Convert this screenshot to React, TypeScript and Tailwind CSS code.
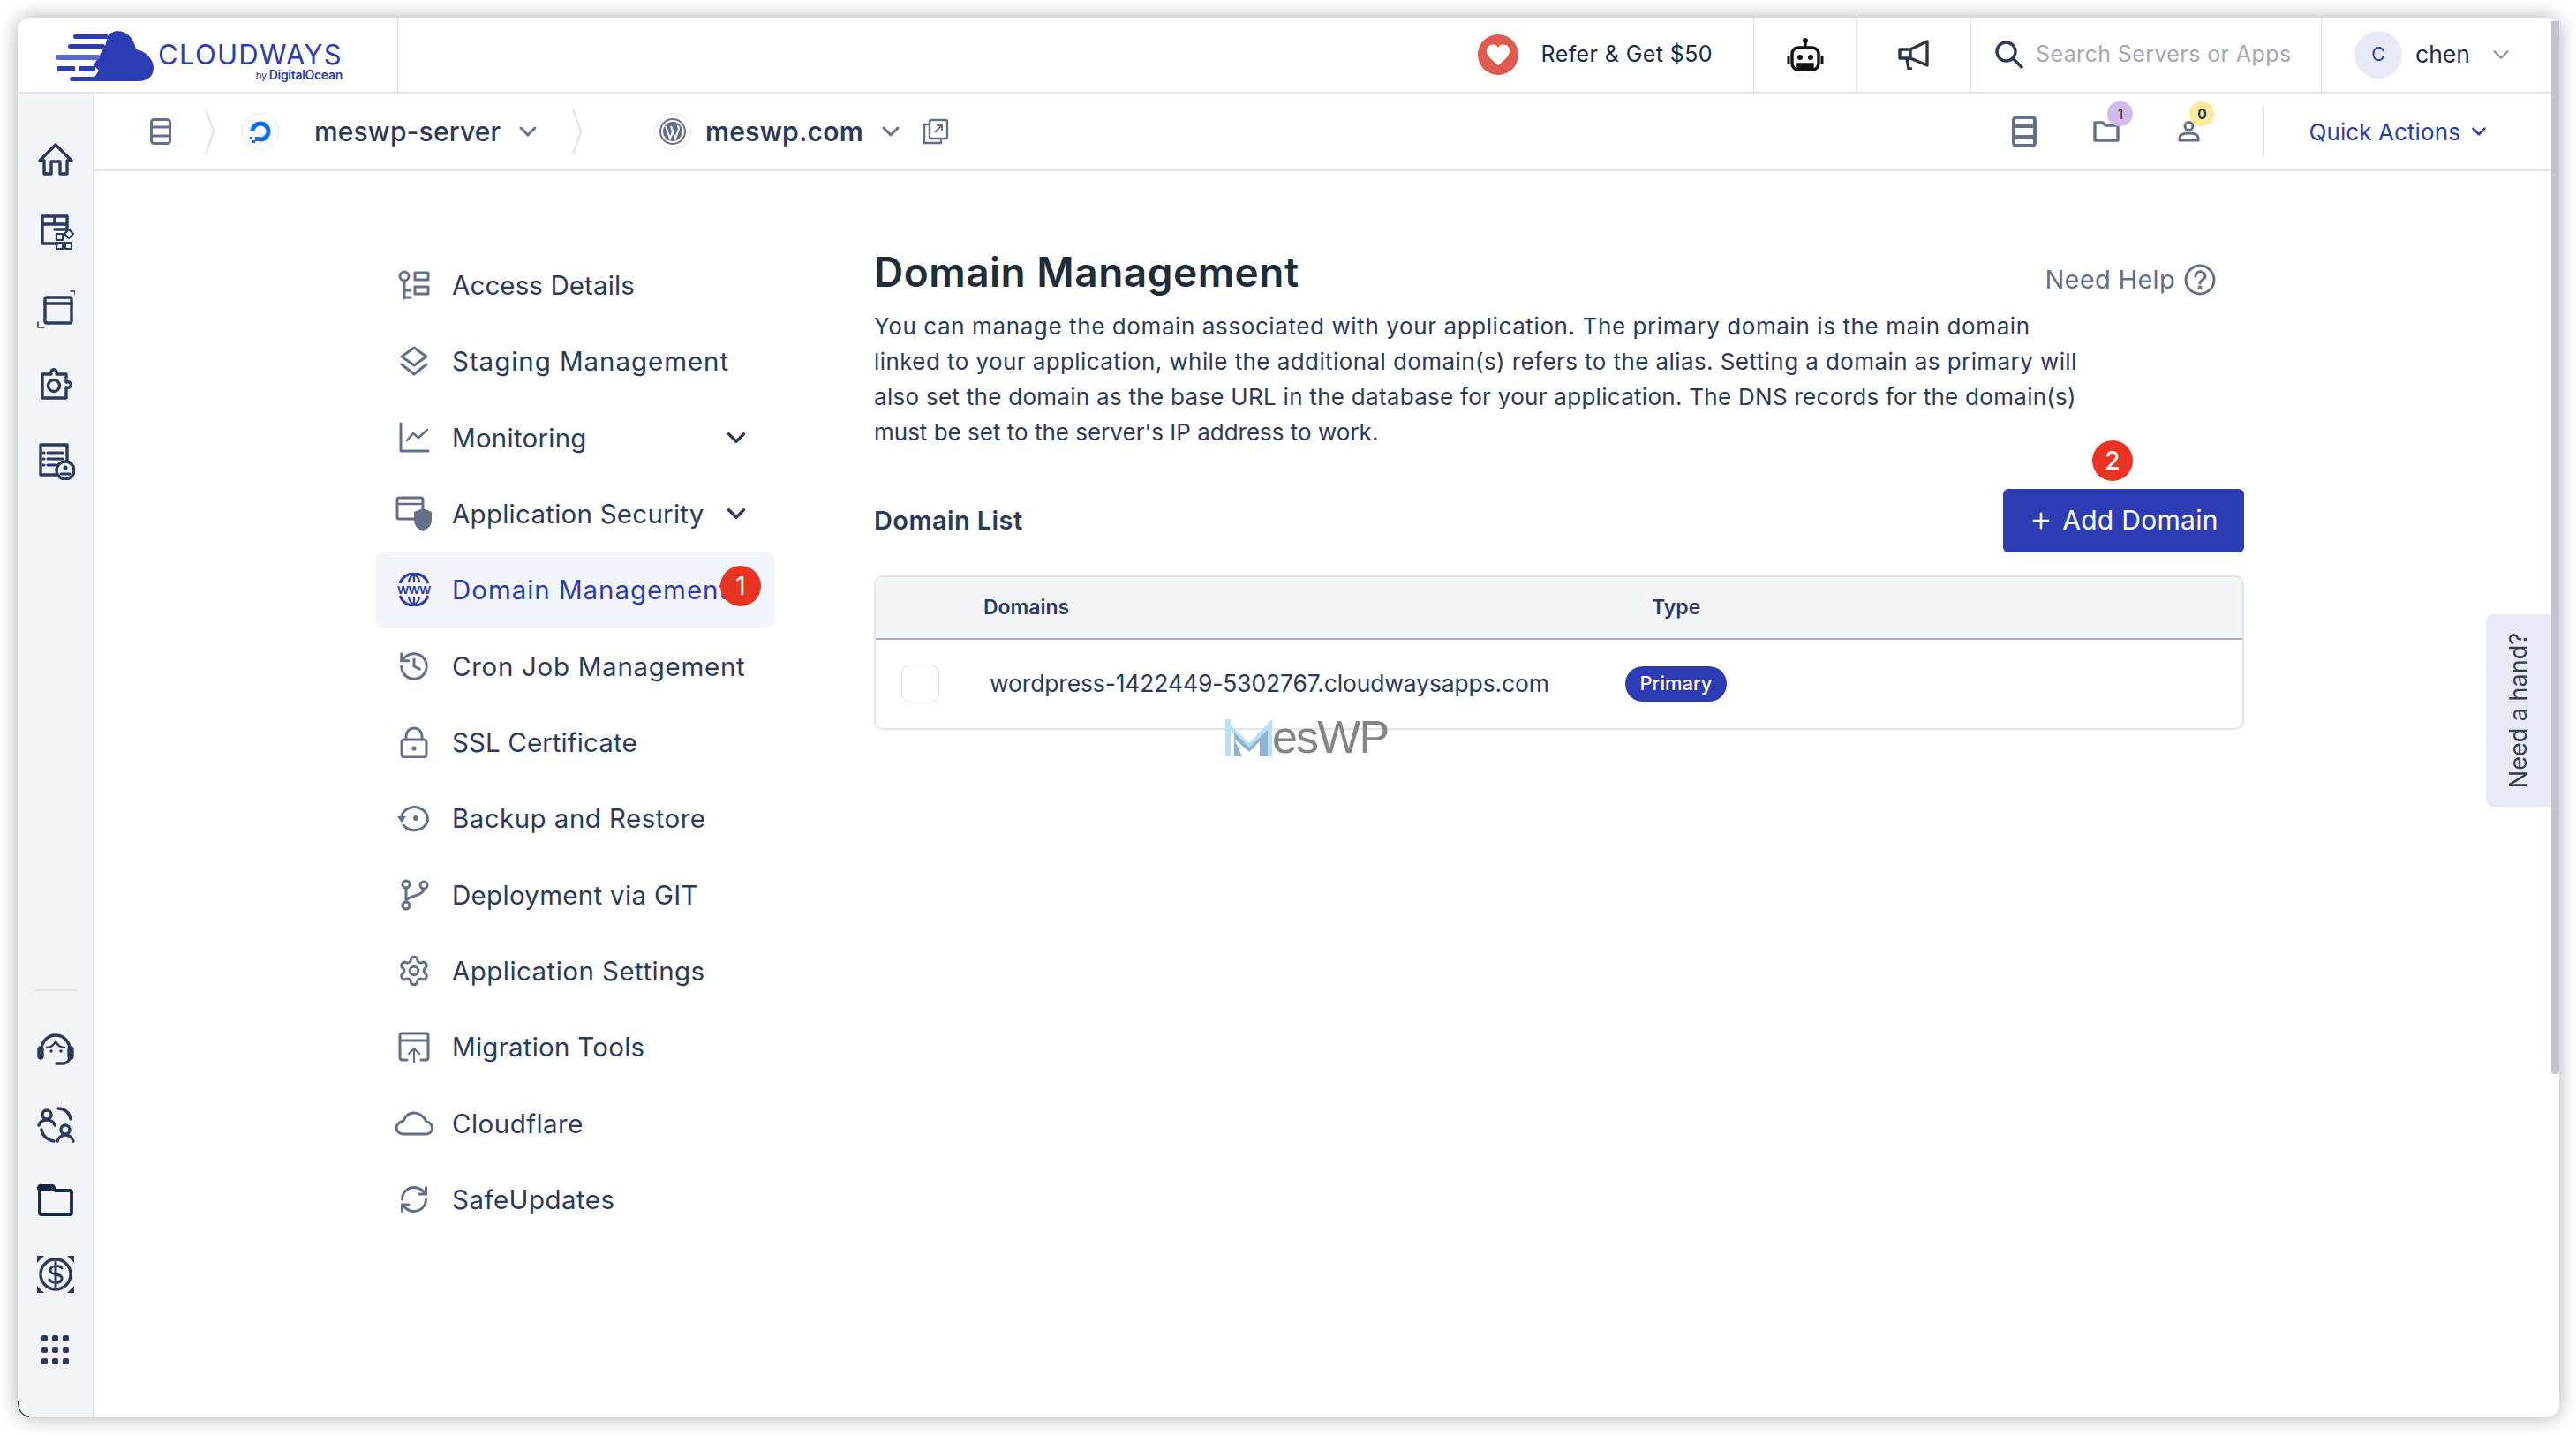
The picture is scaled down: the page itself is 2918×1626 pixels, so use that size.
import { ChevronDown, History, Plus, RefreshCw, Settings } from 'lucide-react';
import type { ReactNode } from 'react';

function NavSvg({ w = 40, h = 36, children }: { w?: number; h?: number; children: ReactNode }) {
  return (
    <svg width={w} height={h} viewBox={`0 0 ${w} ${h}`} fill="none" stroke="#64708a" strokeWidth="3" strokeLinecap="round" strokeLinejoin="round">
      {children}
    </svg>
  );
}

function SideSvg({ children, className, w = 44, h = 44 }: { children: ReactNode; className?: string; w?: number; h?: number }) {
  return (
    <svg className={className} width={w} height={h} viewBox={`0 0 ${w} ${h}`} fill="none" stroke="#2b3a5c" strokeWidth="3.4" strokeLinecap="round" strokeLinejoin="round">
      {children}
    </svg>
  );
}

const navItems: { label: string; icon: ReactNode; track: string; chevron?: boolean; active?: boolean }[] = [
  {
    label: 'Access Details',
    track: 'tracking-[0.1px]',
    icon: (
      <NavSvg>
        <circle cx="9" cy="8" r="5" />
        <path d="M9 13v20M9 24h7M9 32h7" />
        <path d="M21 4h15v8H21zM21 20h15v8H21z" strokeLinecap="butt" />
      </NavSvg>
    ),
  },
  {
    label: 'Staging Management',
    track: 'tracking-[0.95px]',
    icon: (
      <NavSvg>
        <path d="M20 3l14 10-14 10L6 13z" />
        <path d="M6 22l14 11 14-11" />
      </NavSvg>
    ),
  },
  {
    label: 'Monitoring',
    track: 'tracking-[0.25px]',
    chevron: true,
    icon: (
      <NavSvg>
        <path d="M5 2v31h31" />
        <path d="M12 21l7-8 6 5 10-9" strokeWidth="2.4" />
      </NavSvg>
    ),
  },
  {
    label: 'Application Security',
    track: 'tracking-[0.25px]',
    chevron: true,
    icon: (
      <NavSvg w={44} h={42}>
        <path d="M32 27H5a2 2 0 0 1-2-2V5a2 2 0 0 1 2-2h25a2 2 0 0 1 2 2v10" />
        <path d="M3 10h29" strokeWidth="2.4" />
        <path d="M32 15l10 4v9c0 7-5 11-10 13-5-2-10-6-10-13v-9z" fill="#64708a" stroke="none" />
      </NavSvg>
    ),
  },
  {
    label: 'Domain Management',
    track: 'tracking-[0.95px]',
    active: true,
    icon: (
      <svg width="40" height="38" viewBox="0 0 40 38" fill="none" stroke="#2b3cb5" strokeWidth="3">
        <path d="M4 12a17 17 0 0 1 32 0M4 26a17 17 0 0 0 32 0" />
        <path d="M20 2v9M20 27v9M14 11c0-4 3-8 6-9 3 1 6 5 6 9M14 27c0 4 3 8 6 9 3-1 6-5 6-9" strokeWidth="2.2" />
        <text x="20" y="24" textAnchor="middle" fontFamily="Liberation Sans, sans-serif" fontWeight="700" fontSize="13.5" fill="#2b3cb5" stroke="none" letterSpacing="-0.3">WWW</text>
      </svg>
    ),
  },
  { label: 'Cron Job Management', track: 'tracking-[0.7px]', icon: <History size={38} color="#64708a" strokeWidth={1.9} /> },
  {
    label: 'SSL Certificate',
    track: 'tracking-[0.1px]',
    icon: (
      <NavSvg>
        <rect x="6" y="15" width="28" height="20" rx="3" />
        <path d="M11 15v-4a9 9 0 0 1 18 0v4" />
        <circle cx="20" cy="25" r="2.6" fill="#64708a" stroke="none" />
      </NavSvg>
    ),
  },
  {
    label: 'Backup and Restore',
    track: 'tracking-[0.45px]',
    icon: (
      <NavSvg>
        <path d="M6 15a15 13 0 1 1 2 11" />
        <path d="M1 16h10l-5 7z" fill="#64708a" stroke="none" />
        <circle cx="22" cy="18" r="3" fill="#64708a" stroke="none" />
      </NavSvg>
    ),
  },
  {
    label: 'Deployment via GIT',
    track: 'tracking-[0.3px]',
    icon: (
      <NavSvg>
        <circle cx="11" cy="6" r="4" />
        <circle cx="11" cy="30" r="4" />
        <circle cx="31" cy="7" r="4" />
        <path d="M11 10v16M31 11c0 8-14 7-20 13" />
      </NavSvg>
    ),
  },
  { label: 'Application Settings', track: 'tracking-[0.45px]', icon: <Settings size={38} color="#64708a" strokeWidth={1.9} /> },
  {
    label: 'Migration Tools',
    track: 'tracking-[0.25px]',
    icon: (
      <NavSvg>
        <path d="M12 33H6a3 3 0 0 1-2-3V5a2 2 0 0 1 2-2h28a2 2 0 0 1 2 2v25a3 3 0 0 1-2 3h-6" />
        <path d="M4 11h32" />
        <path d="M20 36V21M14 26l6-6 6 6" strokeWidth="2.2" />
      </NavSvg>
    ),
  },
  {
    label: 'Cloudflare',
    track: 'tracking-[0.45px]',
    icon: (
      <NavSvg w={44} h={28}>
        <path d="M10 26h25a7 7 0 0 0 1-14C33 6 28 2 22 2c-6 0-10 4-12 9-5 1-8 5-8 8 0 4 4 7 8 7z" />
      </NavSvg>
    ),
  },
  { label: 'SafeUpdates', track: 'tracking-[0.45px]', icon: <RefreshCw size={36} color="#64708a" strokeWidth={2} /> },
];

const paragraph = [
  { text: 'You can manage the domain associated with your application. The primary domain is the main domain', track: 'tracking-[0.6px]' },
  { text: 'linked to your application, while the additional domain(s) refers to the alias. Setting a domain as primary will', track: 'tracking-[0.42px]' },
  { text: 'also set the domain as the base URL in the database for your application. The DNS records for the domain(s)', track: 'tracking-[0.28px]' },
  { text: "must be set to the server's IP address to work.", track: 'tracking-[0px]' },
];

function Logo() {
  return (
    <div className="flex items-center">
      <svg width="115" height="60" viewBox="0 0 115 60" fill="#2b3cb5">
        <path d="M71 1c11 0 19 9 21 21 12 2 20 12 20 21 0 10-8 15-17 15H42l8-12-6-6 6-10 7-12 3-10c3-5 7-7 11-7z" />
        <rect x="21" y="5" width="40" height="5" rx="2.5" />
        <rect x="15" y="16" width="42" height="5" rx="2.5" />
        <rect x="1" y="28" width="50" height="6" rx="3" fill="#5a68c8" />
        <rect x="3" y="41" width="20" height="6" rx="1" />
        <rect x="28" y="41" width="18" height="6" />
        <rect x="17" y="53" width="30" height="5" rx="2.5" />
      </svg>
      <div className="ml-[2px] flex flex-col items-end pt-[12px]">
        <span className="text-[31px] leading-[30px] font-normal tracking-[1.3px] text-[#2b3cb5]">CLOUDWAYS</span>
        <span className="text-[14px] leading-[15px] font-semibold tracking-[-0.3px] text-[#2b3cb5]">
          <span className="font-normal text-[11px]">by </span>DigitalOcean
        </span>
      </div>
    </div>
  );
}

function BreadcrumbArrow() {
  return (
    <svg width="12" height="54" viewBox="0 0 12 54" fill="none" stroke="#dfe1e6" strokeWidth="2">
      <path d="M1 1l9 26-9 26" />
    </svg>
  );
}

function ServerIcon({ w, h, stroke }: { w: number; h: number; stroke: number }) {
  return (
    <svg width={w} height={h} viewBox={`0 0 ${w} ${h}`} fill="none" stroke="#64708a" strokeWidth={stroke}>
      <rect x={stroke / 2} y={stroke / 2} width={w - stroke} height={h - stroke} rx="3" />
      <path d={`M0 ${h / 3}H${w}M0 ${(h * 2) / 3}H${w}`} />
    </svg>
  );
}

function Header() {
  return (
    <header className="flex h-[86px] shrink-0 border-b-2 border-[#e2e4e9] pr-[9px]">
      <div className="flex w-[431px] items-center border-r border-[#e2e4e9] pl-[42px] pt-[4px]">
        <Logo />
      </div>
      <div className="flex flex-1 justify-end">
        <div className="flex items-center border-r border-[#e2e4e9] pr-[46px]">
          <div className="flex h-[46px] w-[46px] items-center justify-center rounded-full bg-[#df5a4f]">
            <svg width="28" height="26" viewBox="0 0 28 26" fill="#fff">
              <path d="M14 25C8 20 1 15 1 8a7 7 0 0 1 13-3 7 7 0 0 1 13 3c0 7-7 12-13 17z" />
            </svg>
          </div>
          <span className="ml-[26px] text-[25px] tracking-[0.4px] text-[#1c2b4a]">Refer &amp; Get $50</span>
        </div>
        <div className="flex w-[116px] items-center justify-center border-r border-[#e2e4e9]">
          <svg width="44" height="40" viewBox="0 0 44 40" fill="none" stroke="#111" strokeWidth="3.4">
            <circle cx="22" cy="4" r="3" fill="#111" stroke="none" />
            <path d="M22 6v6" />
            <rect x="7" y="12" width="30" height="25" rx="7" />
            <path d="M3 22v8M41 22v8" strokeWidth="3" />
            <circle cx="16" cy="23" r="3" fill="#111" stroke="none" />
            <circle cx="28" cy="23" r="3" fill="#111" stroke="none" />
            <path d="M14 37v-6h16v6" fill="#111" />
          </svg>
        </div>
        <div className="flex w-[130px] items-center justify-center border-r border-[#e2e4e9]">
          <svg width="36" height="34" viewBox="0 0 36 34" fill="none" stroke="#2a3644" strokeWidth="3.4" strokeLinejoin="round">
            <path d="M2 11h12L33 2v27l-19-8H2z" />
            <path d="M14 11v10M10 21l2 12h4" />
          </svg>
        </div>
        <div className="flex w-[397px] items-center border-r border-[#e2e4e9] pl-[27px]">
          <svg width="32" height="32" viewBox="0 0 32 32" fill="none" stroke="#2b3a5c" strokeWidth="3.4" strokeLinecap="round">
            <circle cx="12.5" cy="12.5" r="10.5" />
            <path d="M20 20l10 10" />
          </svg>
          <span className="ml-[14px] text-[25px] tracking-[0.4px] text-[#a3a8b5]">Search Servers or Apps</span>
        </div>
        <div className="flex w-[260px] items-center pl-[37px]">
          <div className="flex h-[54px] w-[54px] items-center justify-center rounded-full bg-[#e8eaf8] text-[21px] text-[#2b3cb5]">C</div>
          <span className="ml-[15px] text-[26.5px] text-[#1c2b4a]">chen</span>
          <ChevronDown className="ml-[20px]" size={30} color="#8a93a6" strokeWidth={1.8} />
        </div>
      </div>
    </header>
  );
}

function Breadcrumb() {
  return (
    <div className="flex h-[88px] shrink-0 items-center border-b-2 border-[#e2e4e9] pl-[63px]">
      <ServerIcon w={24} h={30} stroke={3} />
      <div className="ml-[38px]">
        <BreadcrumbArrow />
      </div>
      <div className="ml-[30px] flex h-[42px] w-[42px] items-center justify-center rounded-full border border-[#e6e7ec]">
        <svg width="28" height="28" viewBox="0 0 28 28" fill="none">
          <path d="M5 14A9 9 0 1 1 14 23" stroke="#0f6ffd" strokeWidth="5" />
          <path d="M8 20h5v5H8zM4 24h4v3H4zM2 20h3v3H2z" fill="#0f6ffd" />
        </svg>
      </div>
      <span className="ml-[40px] w-[213px] whitespace-nowrap text-[30px] font-medium tracking-[0.15px] text-[#2b3a5c]">meswp-server</span>
      <ChevronDown className="ml-[13px]" size={32} color="#64708a" strokeWidth={2.2} />
      <div className="ml-[34px]">
        <BreadcrumbArrow />
      </div>
      <div className="ml-[81px] flex h-[42px] w-[42px] items-center justify-center rounded-full border border-[#e6e7ec]">
        <svg width="32" height="32" viewBox="0 0 32 32">
          <circle cx="16" cy="16" r="14" fill="none" stroke="#64708a" strokeWidth="2" />
          <circle cx="16" cy="16" r="11" fill="#64708a" />
          <path d="M8 10l5 14 3-8-2-6M14 10l5 14 4-11c0-2-1-3-2-3" fill="none" stroke="#fff" strokeWidth="2" />
        </svg>
      </div>
      <span className="ml-[16px] w-[180px] whitespace-nowrap text-[30px] font-semibold tracking-[0.15px] text-[#2b3a5c]">meswp.com</span>
      <ChevronDown className="ml-[14px]" size={32} color="#64708a" strokeWidth={2.2} />
      <svg className="ml-[20px]" width="30" height="30" viewBox="0 0 30 30" fill="none" stroke="#64708a" strokeWidth="2.4">
        <path d="M7 7H2v21h19v-5" />
        <rect x="8" y="2" width="20" height="21" rx="2" />
        <path d="M14 16l8-8M16 8h6v6" strokeWidth="2" />
      </svg>
      <div className="ml-auto flex items-center pr-[69px]">
        <ServerIcon w={28} h={36} stroke={4} />
        <div className="relative ml-[64px]">
          <svg width="30" height="24" viewBox="0 0 30 24" fill="none" stroke="#64708a" strokeWidth="3.4" strokeLinejoin="round">
            <path d="M2 22V2h9l3 3h14v17z" />
          </svg>
          <span className="absolute -top-[22px] left-[16px] flex h-[28px] w-[29px] items-center justify-center rounded-full bg-[#d5b9e8] text-[16px] text-[#1c2b4a]">1</span>
        </div>
        <div className="relative ml-[66px]">
          <svg width="25" height="24" viewBox="0 0 25 24" fill="none" stroke="#64708a" strokeWidth="3">
            <circle cx="12.5" cy="6" r="4.5" />
            <path d="M2 22v-3c0-3 4-5 10.5-5S23 16 23 19v3z" />
          </svg>
          <span className="absolute -top-[22px] left-[13px] flex h-[28px] w-[28px] items-center justify-center rounded-full bg-[#fbec9b] text-[16px] font-semibold text-[#1c2b4a]">0</span>
        </div>
        <div className="ml-[72px] h-[57px] w-px bg-[#e2e4e9]" />
        <span className="ml-[50px] text-[26px] tracking-[0.1px] text-[#2b3cb5]">Quick Actions</span>
        <ChevronDown className="ml-[8px]" size={26} color="#2b3cb5" strokeWidth={2.4} />
      </div>
    </div>
  );
}

function Sidebar() {
  return (
    <aside className="flex w-[87px] shrink-0 flex-col items-center border-r-2 border-[#e6e7ec] bg-[#f3f4f7]">
      <div className="mt-[52px] flex flex-col items-center">
        <SideSvg>
          <path d="M4 24L22 6l18 18h-5v15H27V25H17v14H9V24z" />
        </SideSvg>
        <SideSvg className="mt-[38px]">
          <path d="M24 36H7V5h28v15H21M7 14h28M21 5v9" />
          <rect x="23" y="25" width="7" height="7" strokeWidth="2.2" />
          <rect x="23" y="35" width="7" height="7" strokeWidth="2.2" />
          <rect x="33" y="35" width="7" height="7" strokeWidth="2.2" />
          <path d="M37 20l5 5-5 5-5-5z" strokeWidth="2.2" />
        </SideSvg>
        <SideSvg className="mt-[44px]">
          <rect x="10" y="9" width="30" height="29" rx="2" />
          <path d="M10 16h30" />
          <path d="M39 2h5v4M2 37v6h7" strokeWidth="1.6" />
        </SideSvg>
        <SideSvg className="mt-[40px]">
          <path d="M7 12h10c-2-7 8-7 6 0h11v9c7-2 7 8 0 6v12H7z" />
          <circle cx="20" cy="25" r="6.5" />
        </SideSvg>
        <SideSvg className="mt-[44px]">
          <path d="M22 38H5V4h30v20" />
          <path d="M13 13h17M13 20h17M13 27h10M8 13h1M8 20h1M8 27h1" strokeWidth="3" />
          <circle cx="33" cy="33" r="10" fill="#f3f4f7" />
          <circle cx="33" cy="30" r="2.5" fill="#2b3a5c" stroke="none" />
          <path d="M28 37h10" strokeWidth="3" />
        </SideSvg>
      </div>
      <div className="mt-auto mb-[55px] flex flex-col items-center">
        <div className="mb-[44px] h-[2px] w-[50px] bg-[#e2e4e9]" />
        <div className="flex flex-col items-center gap-[41px]">
          <SideSvg>
            <path d="M6 22a16 16 0 0 1 32 0v8c0 5-3 8-8 8h-7" />
            <rect x="3" y="20" width="4" height="12" rx="2" fill="#2b3a5c" />
            <rect x="37" y="20" width="4" height="12" rx="2" fill="#2b3a5c" />
            <path d="M12 20c5 0 8-3 10-7 2 4 5 7 10 7" strokeWidth="2.4" />
            <circle cx="17" cy="24" r="1.8" fill="#2b3a5c" stroke="none" />
            <circle cx="28" cy="24" r="1.8" fill="#2b3a5c" stroke="none" />
          </SideSvg>
          <SideSvg>
            <circle cx="12" cy="11" r="5" />
            <path d="M3 23c1-4 5-6 9-6s8 2 9 6" />
            <circle cx="33" cy="28" r="5" />
            <path d="M24 41c1-4 5-7 9-7s8 3 9 7" />
            <path d="M25 4c7 0 13 5 14 12M6 28c1 7 7 12 14 13" />
          </SideSvg>
          <SideSvg>
            <path d="M4 11v26a2 2 0 0 0 2 2h32a2 2 0 0 0 2-2V14a2 2 0 0 0-2-2H22l-3-5H6a2 2 0 0 0-2 4z" strokeWidth="3.8" stroke="#14264d" />
            <path d="M4 9h16v3H4z" fill="#14264d" stroke="none" />
          </SideSvg>
          <SideSvg>
            <circle cx="22" cy="22" r="17" />
            <path d="M29 15c-2-3-12-4-13 2-1 7 14 3 13 10-1 6-11 5-14 1M22 8v28" strokeWidth="3" />
            <path d="M1 1h8L1 9zM43 1h-8l8 8zM1 43h8l-8-8zM43 43h-8l8-8z" fill="#2b3a5c" stroke="none" />
          </SideSvg>
          <div className="grid h-[44px] w-[44px] grid-cols-3 content-center justify-items-center gap-y-[6px] px-[4px]">
            {Array.from({ length: 9 }).map((_, i) => (
              <span key={i} className="h-[7px] w-[7px] rounded-[2px] bg-[#2b3a5c]" />
            ))}
          </div>
        </div>
      </div>
    </aside>
  );
}

function SettingsNav() {
  return (
    <nav className="w-[453px] shrink-0">
      {navItems.map((item) => (
        <div
          key={item.label}
          className={`relative flex h-[86.33px] items-center rounded-[10px] ${item.active ? 'bg-[#f4f5fb] text-[#2b3cb5]' : 'text-[#2b3a5c]'}`}
        >
          <span className="flex w-[87px] shrink-0 justify-center">{item.icon}</span>
          <span className={`whitespace-nowrap text-[29.5px] ${item.track}`}>{item.label}</span>
          {item.chevron && (
            <ChevronDown className="absolute left-[392px]" size={34} color="#2b3a5c" strokeWidth={2.4} />
          )}
          {item.active && (
            <span className="absolute left-[391px] top-[16px] flex h-[46px] w-[46px] items-center justify-center rounded-full bg-[#ea3323] text-[28px] text-white">1</span>
          )}
        </div>
      ))}
    </nav>
  );
}

function DomainPanel() {
  return (
    <section className="ml-[112px] -mt-[3px] w-[1552px]">
      <div className="flex items-center justify-between pr-[32px]">
        <h1 className="text-[46px] font-semibold leading-[50px] tracking-[0.5px] text-[#1f2d3a]">Domain Management</h1>
        <div className="flex items-center pt-[18px]">
          <span className="text-[29px] tracking-[0.3px] text-[#64708a]">Need Help</span>
          <svg className="ml-[10px]" width="36" height="36" viewBox="0 0 36 36" fill="none" stroke="#64708a" strokeWidth="3" strokeLinecap="round">
            <circle cx="18" cy="18" r="16" />
            <path d="M13 14c0-7 11-7 11 0 0 4-6 4-6 8" />
            <circle cx="18" cy="27" r="1" />
          </svg>
        </div>
      </div>
      <p className="mt-[11px] whitespace-nowrap text-[26px] leading-[40px] text-[#2b3a5c]">
        {paragraph.map((line) => (
          <span key={line.text} className={`block ${line.track}`}>{line.text}</span>
        ))}
      </p>
      <div className="mt-[44px] flex items-end justify-between">
        <h2 className="pb-[17px] text-[29px] font-semibold leading-[38px] tracking-[0.4px] text-[#2b3a5c]">Domain List</h2>
        <div className="relative">
          <span className="absolute -top-[55px] left-[101px] flex h-[46px] w-[46px] items-center justify-center rounded-full bg-[#ea3323] text-[28px] font-medium text-white">2</span>
          <button className="flex h-[72px] w-[273px] items-center justify-center rounded-[6px] bg-[#2b3cb5] text-[30px] tracking-[0.3px] text-white">
            <Plus size={28} strokeWidth={2.2} />
            <span className="ml-[10px]">Add Domain</span>
          </button>
        </div>
      </div>
      <div className="relative mt-[26px] rounded-[10px] border-2 border-[#e2e4e9]">
        <div className="flex h-[71px] items-center rounded-t-[10px] border-b-2 border-[#a8b0c0] bg-[#f3f4f6] text-[23px] font-semibold text-[#2b3a5c]">
          <span className="ml-[122px] w-[757px]">Domains</span>
          <span>Type</span>
        </div>
        <div className="flex h-[100px] items-center">
          <span className="ml-[29px] h-[43px] w-[43px] rounded-[10px] border border-[#dcdcdc]" />
          <span className="ml-[57px] w-[720px] whitespace-nowrap text-[26.5px] tracking-[-0.15px] text-[#2b3a5c]">wordpress-1422449-5302767.cloudwaysapps.com</span>
          <span className="flex h-[40px] w-[115px] items-center justify-center rounded-full bg-[#2b3cb5] text-[22px] font-medium text-white">Primary</span>
        </div>
        <div className="absolute left-[396px] top-[159px] flex items-end">
          <svg width="56" height="42" viewBox="0 0 56 42">
            <path d="M0 0l27 27L53 0v8L27 34 0 8z" fill="#b9def7" />
            <path d="M0 0h6v42H0zM47 6l6-6v42h-6z" fill="#b9def7" />
            <path d="M10 22l17 15 12-12v17h9V12L27 32 10 15v27h9z" fill="#8fb2cf" />
          </svg>
          <span className="ml-[-3px] text-[52px] leading-[44px] tracking-[-1.8px] text-[#858585] font-['Liberation_Sans',sans-serif]">esWP</span>
        </div>
      </div>
    </section>
  );
}

export default function App() {
  return (
    <div className="h-[1626px] w-[2918px] overflow-hidden bg-white pl-[20px] pt-[20px] font-['Inter',sans-serif]">
      <div className="relative flex h-[1586px] w-[2879px] flex-col rounded-[14px] bg-white shadow-[0_0_22px_rgba(0,0,0,0.32)]">
        <Header />
        <div className="flex flex-1">
          <Sidebar />
          <main className="flex-1 pr-[9px]">
            <Breadcrumb />
            <div className="flex pl-[318px] pt-[86px]">
              <SettingsNav />
              <DomainPanel />
            </div>
          </main>
        </div>
        <div className="absolute right-[8px] top-[676px] flex h-[218px] w-[75px] items-center justify-center rounded-l-[8px] bg-[#e8eaf8]">
          <span className="rotate-180 whitespace-nowrap text-[27px] text-[#333c4d] [writing-mode:vertical-rl]">Need a hand?</span>
        </div>
        <div className="absolute right-0 top-[4px] h-[1193px] w-[9px] rounded-b-[4px] bg-[#c1c5d0]" />
        <svg className="absolute bottom-0 left-0" width="14" height="18" viewBox="0 0 14 18" fill="none" stroke="#222" strokeWidth="1.2">
          <path d="M0.6 0C0.6 10 5 16 13 17.5" />
        </svg>
      </div>
    </div>
  );
}
